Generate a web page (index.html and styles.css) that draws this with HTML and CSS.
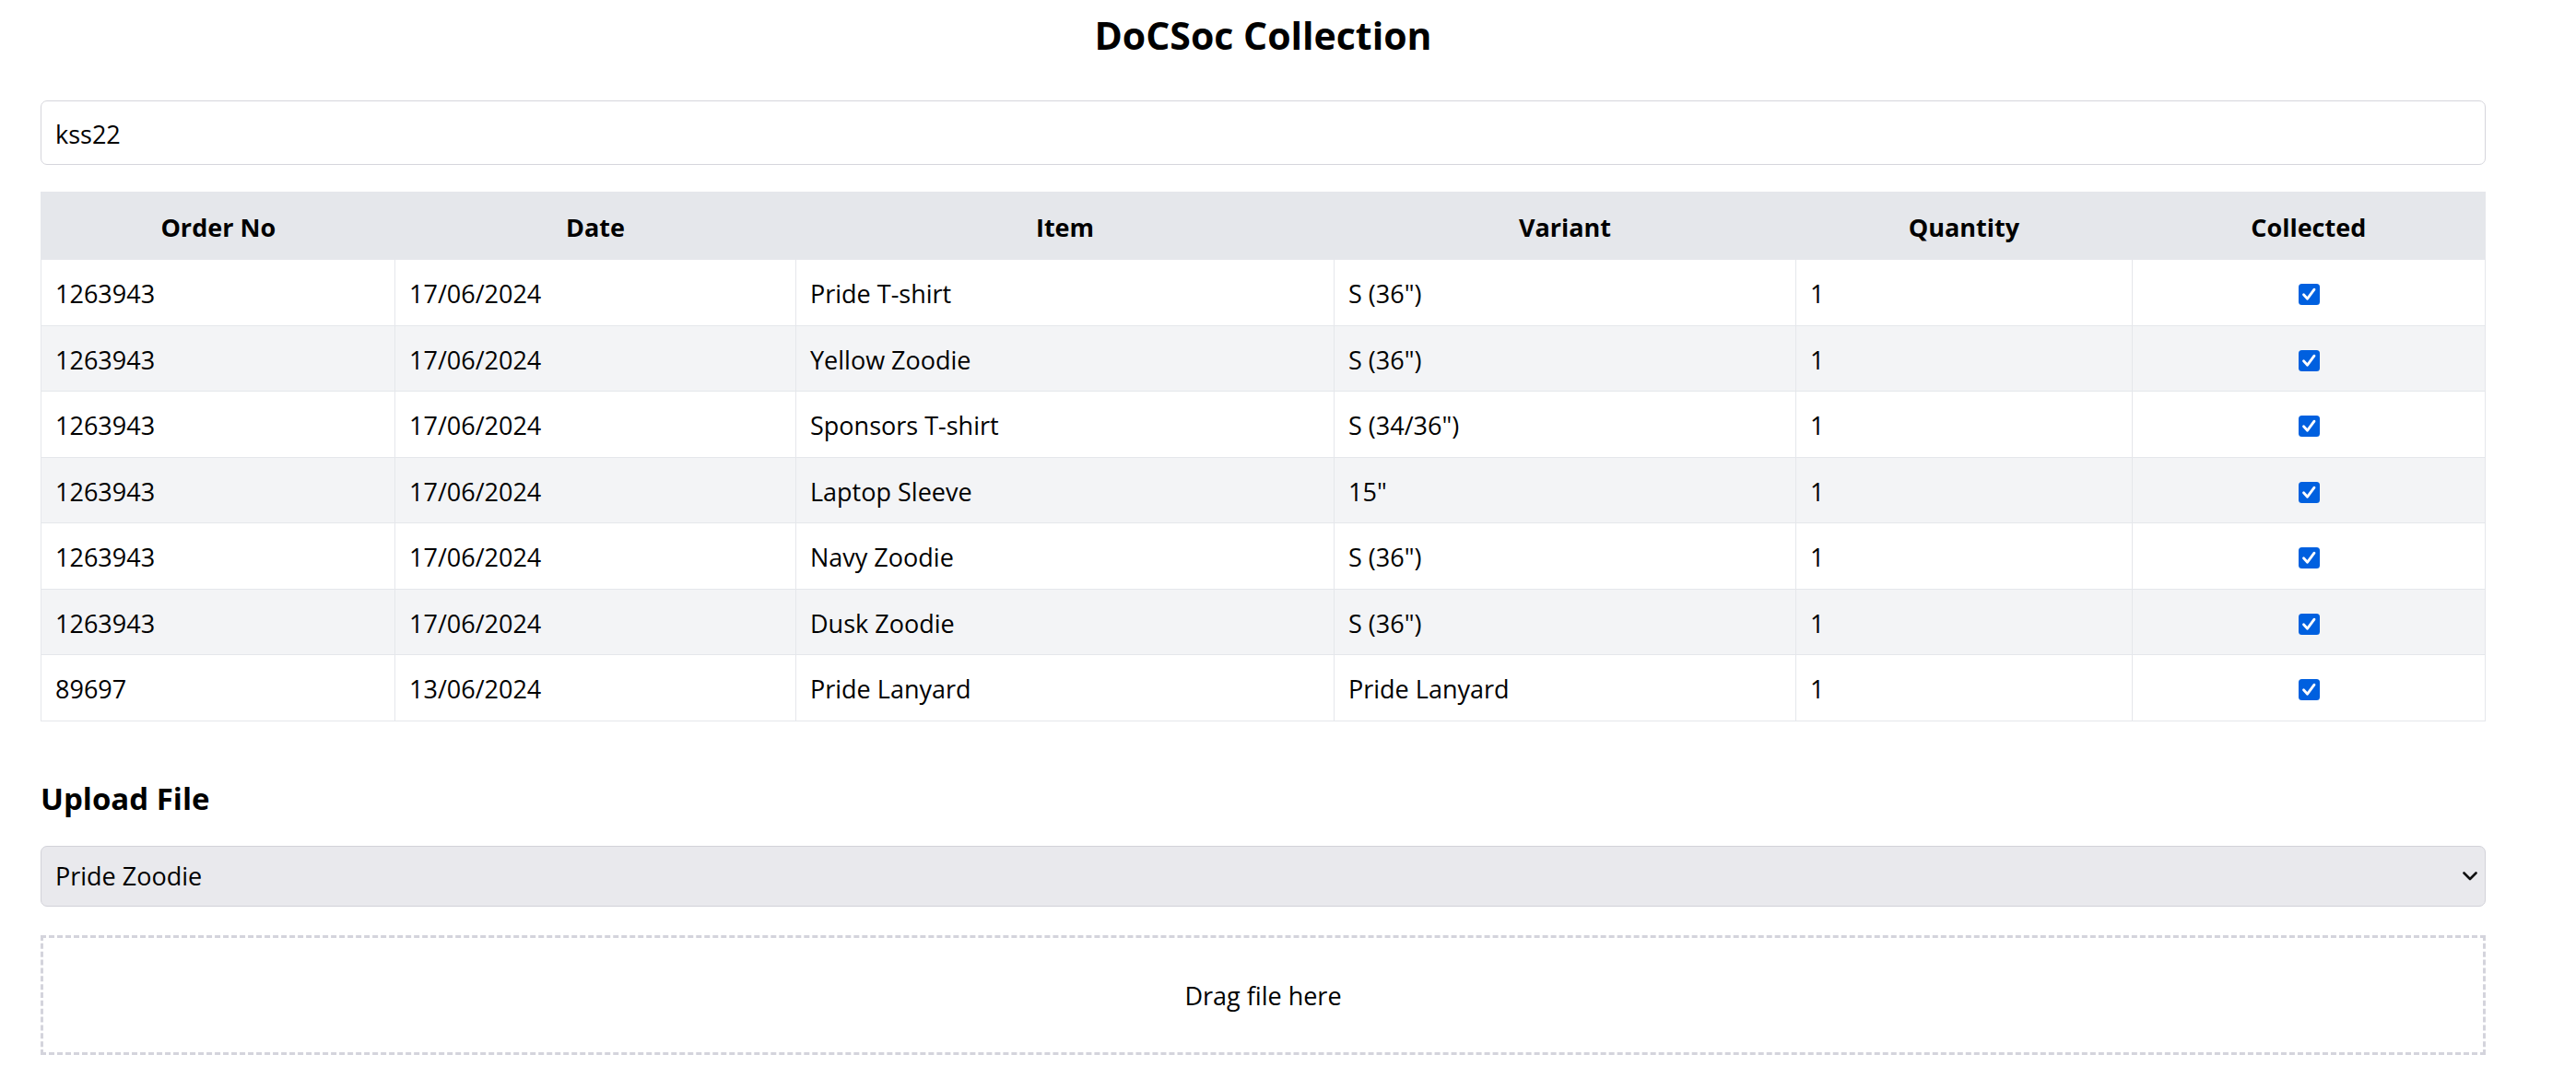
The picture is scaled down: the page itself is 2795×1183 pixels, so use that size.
FILE: index.html
```html
<!DOCTYPE html>
<html lang="en">
<head>
<meta charset="utf-8">
<title>DoCSoc Collection</title>
<link rel="stylesheet" href="styles.css">
</head>
<body>
<main class="page">
  <h1 class="title">DoCSoc Collection</h1>
  <input class="search" type="text" value="kss22">
  <table class="orders">
    <colgroup>
      <col class="c-order"><col class="c-date"><col class="c-item"><col class="c-variant"><col class="c-qty"><col class="c-coll">
    </colgroup>
    <thead>
      <tr><th>Order No</th><th>Date</th><th>Item</th><th>Variant</th><th>Quantity</th><th>Collected</th></tr>
    </thead>
    <tbody>
      <tr><td>1263943</td><td>17/06/2024</td><td>Pride T-shirt</td><td>S (36")</td><td>1</td><td class="check-cell"><span class="check"><svg viewBox="0 0 23 23" width="23" height="23"><rect x="0" y="0" width="23" height="23" rx="3.5" fill="#0060df"/><path d="M5.5 11.8 L9.6 16.2 L17 6.2" fill="none" stroke="#fff" stroke-width="2.8" stroke-linecap="round" stroke-linejoin="round"/></svg></span></td></tr>
      <tr><td>1263943</td><td>17/06/2024</td><td>Yellow Zoodie</td><td>S (36")</td><td>1</td><td class="check-cell"><span class="check"><svg viewBox="0 0 23 23" width="23" height="23"><rect x="0" y="0" width="23" height="23" rx="3.5" fill="#0060df"/><path d="M5.5 11.8 L9.6 16.2 L17 6.2" fill="none" stroke="#fff" stroke-width="2.8" stroke-linecap="round" stroke-linejoin="round"/></svg></span></td></tr>
      <tr><td>1263943</td><td>17/06/2024</td><td>Sponsors T-shirt</td><td>S (34/36")</td><td>1</td><td class="check-cell"><span class="check"><svg viewBox="0 0 23 23" width="23" height="23"><rect x="0" y="0" width="23" height="23" rx="3.5" fill="#0060df"/><path d="M5.5 11.8 L9.6 16.2 L17 6.2" fill="none" stroke="#fff" stroke-width="2.8" stroke-linecap="round" stroke-linejoin="round"/></svg></span></td></tr>
      <tr><td>1263943</td><td>17/06/2024</td><td>Laptop Sleeve</td><td>15"</td><td>1</td><td class="check-cell"><span class="check"><svg viewBox="0 0 23 23" width="23" height="23"><rect x="0" y="0" width="23" height="23" rx="3.5" fill="#0060df"/><path d="M5.5 11.8 L9.6 16.2 L17 6.2" fill="none" stroke="#fff" stroke-width="2.8" stroke-linecap="round" stroke-linejoin="round"/></svg></span></td></tr>
      <tr><td>1263943</td><td>17/06/2024</td><td>Navy Zoodie</td><td>S (36")</td><td>1</td><td class="check-cell"><span class="check"><svg viewBox="0 0 23 23" width="23" height="23"><rect x="0" y="0" width="23" height="23" rx="3.5" fill="#0060df"/><path d="M5.5 11.8 L9.6 16.2 L17 6.2" fill="none" stroke="#fff" stroke-width="2.8" stroke-linecap="round" stroke-linejoin="round"/></svg></span></td></tr>
      <tr><td>1263943</td><td>17/06/2024</td><td>Dusk Zoodie</td><td>S (36")</td><td>1</td><td class="check-cell"><span class="check"><svg viewBox="0 0 23 23" width="23" height="23"><rect x="0" y="0" width="23" height="23" rx="3.5" fill="#0060df"/><path d="M5.5 11.8 L9.6 16.2 L17 6.2" fill="none" stroke="#fff" stroke-width="2.8" stroke-linecap="round" stroke-linejoin="round"/></svg></span></td></tr>
      <tr><td>89697</td><td>13/06/2024</td><td>Pride Lanyard</td><td>Pride Lanyard</td><td>1</td><td class="check-cell"><span class="check"><svg viewBox="0 0 23 23" width="23" height="23"><rect x="0" y="0" width="23" height="23" rx="3.5" fill="#0060df"/><path d="M5.5 11.8 L9.6 16.2 L17 6.2" fill="none" stroke="#fff" stroke-width="2.8" stroke-linecap="round" stroke-linejoin="round"/></svg></span></td></tr>
    </tbody>
  </table>
  <h2 class="section-title">Upload File</h2>
  <div class="select-wrap">
    <select class="item-select"><option>Pride Zoodie</option></select>
    <svg class="chevron" viewBox="0 0 16 10" width="16" height="10"><path d="M1.5 1.5 L8 8 L14.5 1.5" fill="none" stroke="#111" stroke-width="2.6" stroke-linecap="round" stroke-linejoin="round"/></svg>
  </div>
  <div class="dropzone">Drag file here</div>
</main>
</body>
</html>
```

FILE: styles.css
```css
html, body {
  margin: 0;
  padding: 0;
  background: #fff;
}

body {
  font-family: "Open Sans", "Noto Sans", "Liberation Sans", sans-serif;
  font-size: 27px;
  color: #000;
}

.page {
  box-sizing: border-box;
  width: 2795px;
  padding: 8px 98px 40px 44px;
  display: flex;
  flex-direction: column;
}

.title {
  margin: 0 0 41px 0;
  font-size: 41px;
  font-weight: 700;
  line-height: 60px;
  text-align: center;
}

.search {
  box-sizing: border-box;
  height: 70px;
  width: 100%;
  margin: 0;
  padding: 2px 15px 0 15px;
  border: 1px solid #d6d6dc;
  border-radius: 7px;
  font: inherit;
  color: #000;
  background: #fff;
  outline: none;
}

.orders {
  margin-top: 29px;
  width: 100%;
  border-collapse: collapse;
  table-layout: fixed;
  border: 1px solid #e5e7eb;
}

.c-order { width: 384px; }
.c-date { width: 435px; }
.c-item { width: 584px; }
.c-variant { width: 501px; }
.c-qty { width: 365px; }
.c-coll { width: auto; }

.orders th {
  background: #e5e7eb;
  font-weight: 700;
  text-align: center;
  padding: 16px 14px 12px 14px;
  line-height: 44px;
  border: none;
}

.orders td {
  padding: 16px 14px 12px 15px;
  line-height: 42.5px;
  border: 1px solid #e5e7eb;
  white-space: nowrap;
}

.orders tbody tr:nth-child(even) td {
  background: #f3f4f6;
}

.orders td.check-cell {
  text-align: center;
}

.check {
  display: inline-flex;
  vertical-align: middle;
  position: relative;
  top: -2px;
}

.section-title {
  margin: 59px 0 26px 0;
  font-size: 33px;
  font-weight: 700;
  line-height: 50px;
}

.select-wrap {
  position: relative;
}

.item-select {
  box-sizing: border-box;
  width: 100%;
  height: 66px;
  margin: 0;
  padding: 0 15px;
  -webkit-appearance: none;
  appearance: none;
  background: #e9e9ed;
  border: 1px solid #d2d2d9;
  border-radius: 7px;
  font: inherit;
  color: #000;
  outline: none;
}

.chevron {
  position: absolute;
  right: 9px;
  top: 28px;
  pointer-events: none;
}

.dropzone {
  box-sizing: border-box;
  margin-top: 31px;
  height: 130px;
  padding-top: 2px;
  border: 3px dashed #d4d4dc;
  display: flex;
  align-items: center;
  justify-content: center;
}
```
